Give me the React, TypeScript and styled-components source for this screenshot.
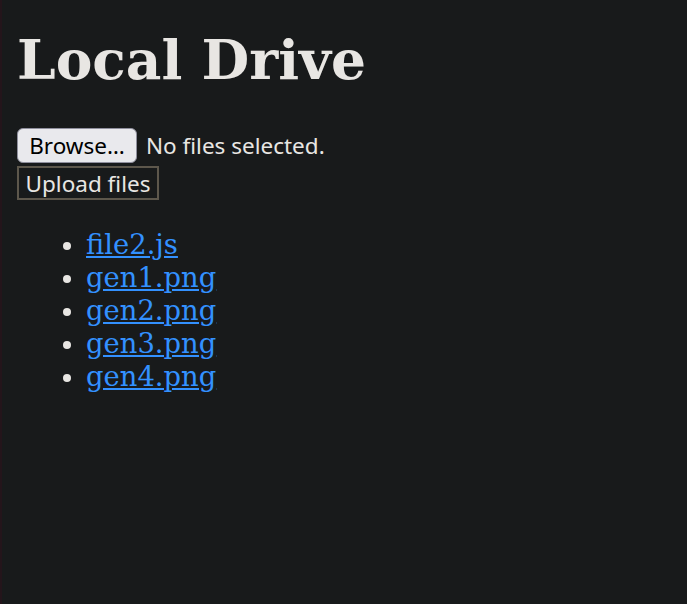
import React from "react";
import styled, { createGlobalStyle } from "styled-components";

const Global = createGlobalStyle`
  html {
    background: #181a1b;
    border-left: 2px solid #24151b;
    min-height: 100%;
  }
  body {
    margin: 0;
    padding: 0 14px;
    background: #181a1b;
    color: #e8e6e3;
    font-family: "DejaVu Serif", serif;
    font-size: 27.4px;
  }
`;

const Page = styled.div`
  display: flex;
  flex-direction: column;
  align-items: flex-start;
`;

const Title = styled.h1`
  font-family: "DejaVu Serif", serif;
  font-size: 55px;
  font-weight: bold;
  line-height: 63px;
  margin: 28px 0 37px 1px;
  color: #e8e6e3;
`;

const UploadForm = styled.form`
  display: flex;
  flex-direction: column;
  align-items: flex-start;
  gap: 3px;
  font-family: "Noto Sans", sans-serif;
  font-size: 22.5px;
`;

const PickerRow = styled.div`
  display: flex;
  align-items: center;
  gap: 9px;
`;

const BrowseButton = styled.button`
  font-family: "Noto Sans", sans-serif;
  font-size: 22.5px;
  height: 35px;
  width: 120px;
  padding: 0;
  margin-left: 1px;
  background: #e9e9ed;
  color: #000;
  border: 1px solid #8f8f9d;
  border-radius: 6px;
`;

const PickerStatus = styled.span`
  color: #e8e6e3;
`;

const SubmitButton = styled.button`
  font-family: "Noto Sans", sans-serif;
  font-size: 22.5px;
  height: 34px;
  width: 142px;
  padding: 0;
  margin-left: 1px;
  background: #181a1b;
  color: #e8e6e3;
  border: 2px solid #5d574c;
  border-radius: 0;
`;

const FileList = styled.ul`
  margin: 28px 0;
  padding-left: 70px;
  line-height: 33px;
  font-size: 27.4px;
`;

const FileItem = styled.li`
  &::marker {
    color: #e8e6e3;
  }
`;

const FileLink = styled.a`
  color: #3391ff;
  text-decoration: underline;
`;

const files = ["file2.js", "gen1.png", "gen2.png", "gen3.png", "gen4.png"];

export default function App() {
  return (
    <>
      <Global />
      <Page>
        <Title>Local Drive</Title>
        <UploadForm onSubmit={(e) => e.preventDefault()}>
          <PickerRow>
            <BrowseButton type="button">Browse…</BrowseButton>
            <PickerStatus>No files selected.</PickerStatus>
          </PickerRow>
          <SubmitButton type="submit">Upload files</SubmitButton>
        </UploadForm>
        <FileList>
          {files.map((f) => (
            <FileItem key={f}>
              <FileLink href="#">{f}</FileLink>
            </FileItem>
          ))}
        </FileList>
      </Page>
    </>
  );
}
